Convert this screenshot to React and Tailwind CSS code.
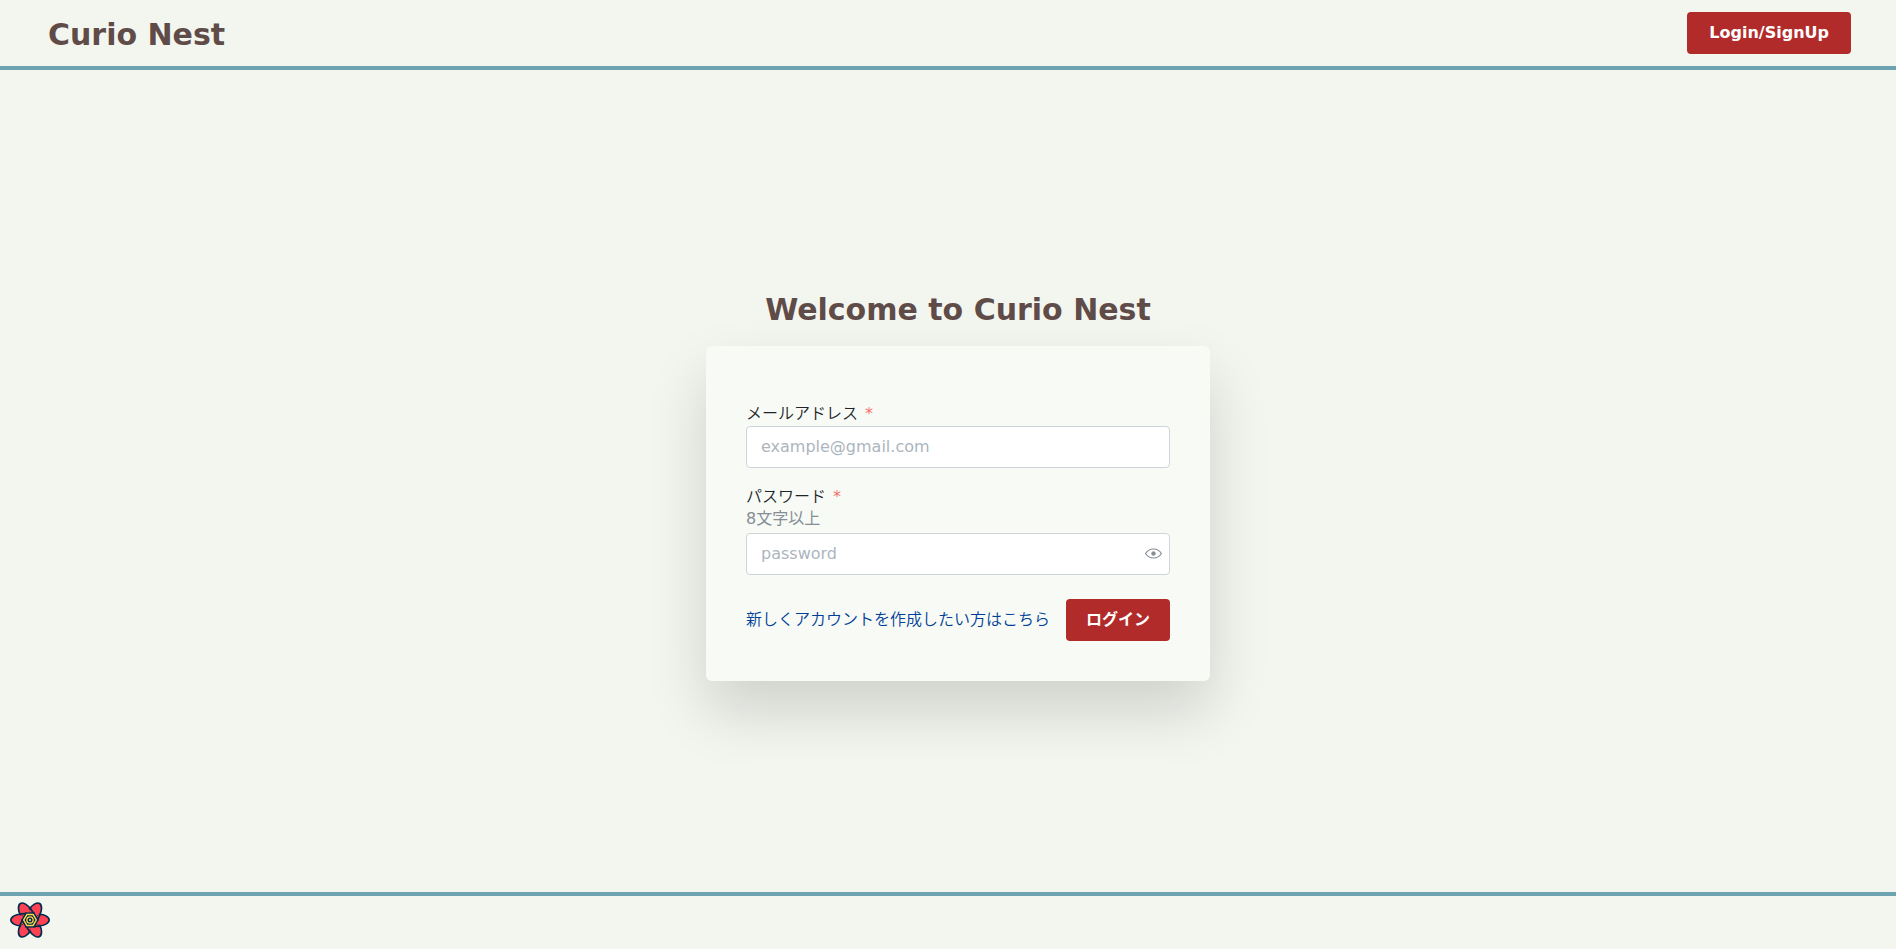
import { useState } from "react";

const PETAL_ANGLES = [0, 60, 120, 180, 240, 300];

function FlowerLogo() {
  return (
    <svg viewBox="0 0 190 190" className="size-10" aria-hidden="true">
      <g transform="translate(95 95)" stroke="#002c4b" strokeWidth="8" strokeLinejoin="round" strokeLinecap="round">
        {PETAL_ANGLES.map((a) => (
          <path
            key={a}
            transform={`rotate(${a})`}
            fill="#ff4154"
            d="M44 -27 C66 -29 91 -14 91 0 C91 14 66 29 44 27 L0 0 Z"
          />
        ))}
        {PETAL_ANGLES.map((a) => (
          <path key={a} transform={`rotate(${a})`} fill="#ff4154" stroke="none" d="M0 0 L44 -24 L60 0 L44 24 Z" />
        ))}
        {PETAL_ANGLES.map((a) => (
          <path key={a} transform={`rotate(${a})`} fill="none" d="M19 -33 L-46 -29" />
        ))}
        <path d="M36 0 L18 31 L-18 31 L-36 0 L-18 -31 L18 -31 Z" fill="#002c4b" />
        <path d="M30 0 L15 26 L-15 26 L-30 0 L-15 -26 L15 -26 Z" fill="none" stroke="#ffd94c" strokeWidth="7" />
        <circle r="15" fill="none" stroke="#ffd94c" strokeWidth="6" />
        <circle r="5" fill="#ffd94c" stroke="none" />
      </g>
    </svg>
  );
}

function EyeIcon() {
  return (
    <svg viewBox="0 0 15 15" className="size-[17px]" fill="none" aria-hidden="true">
      <path
        fill="currentColor"
        fillRule="evenodd"
        clipRule="evenodd"
        d="M7.5 11C4.80285 11 2.52952 9.62184 1.09622 7.50001C2.52952 5.37816 4.80285 4 7.5 4C10.1971 4 12.4705 5.37816 13.9038 7.50001C12.4705 9.62183 10.1971 11 7.5 11ZM7.5 3C4.30786 3 1.65639 4.70638 0.0760002 7.23501C-0.0253338 7.39715 -0.0253334 7.60288 0.0760014 7.76501C1.65639 10.2936 4.30786 12 7.5 12C10.6921 12 13.3436 10.2936 14.924 7.76501C15.0253 7.60288 15.0253 7.39715 14.924 7.23501C13.3436 4.70638 10.6921 3 7.5 3ZM7.5 9.5C8.60457 9.5 9.5 8.60457 9.5 7.5C9.5 6.39543 8.60457 5.5 7.5 5.5C6.39543 5.5 5.5 6.39543 5.5 7.5C5.5 8.60457 6.39543 9.5 7.5 9.5Z"
      />
    </svg>
  );
}

function PrimaryButton({ children, type = "button", padding = "px-5" }) {
  return (
    <button
      type={type}
      className={`h-[42px] shrink-0 cursor-pointer rounded bg-[#b22b2b] font-bold whitespace-nowrap text-white hover:bg-[#9c2424] ${padding}`}
    >
      {children}
    </button>
  );
}

function FieldLabel({ htmlFor, children }) {
  return (
    <label htmlFor={htmlFor} className="flex gap-[7px] leading-[25px] text-[#212529]">
      <span className="font-[350]">{children}</span>
      <span className="text-[#fa5252]/85">*</span>
    </label>
  );
}

const inputClass =
  "h-[42px] w-full rounded border border-[#ced4da] bg-white pl-3.5 text-base text-black outline-none placeholder:text-[#adb5bd] focus:border-[#6ea3b1]";

export default function App() {
  const [visible, setVisible] = useState(false);
  return (
    <div className="flex min-h-screen flex-col bg-[#f3f6ef] font-['DejaVu_Sans','Noto_Sans_CJK_JP',sans-serif] text-base">
      <header className="flex items-center justify-between border-b-4 border-[#6ea3b1] py-3 pr-[45px] pl-12">
        <h1 className="pt-1 text-3xl font-bold text-[#5f4b48]">Curio Nest</h1>
        <PrimaryButton padding="px-[22px]">Login/SignUp</PrimaryButton>
      </header>

      <main className="flex grow flex-col items-center justify-center gap-[18px] pt-2.5 pl-5">
        <h2 className="text-3xl font-bold text-[#5f4b48]">Welcome to Curio Nest</h2>
        <form
          onSubmit={(e) => e.preventDefault()}
          className="w-[504px] max-w-full rounded-md bg-[#f7faf5] px-10 pt-[55px] pb-10 shadow-[0_30px_60px_rgba(0,0,0,0.15)]"
        >
          <div className="mb-4">
            <FieldLabel htmlFor="email">メールアドレス</FieldLabel>
            <input id="email" type="email" placeholder="example@gmail.com" className={inputClass} />
          </div>
          <div className="mb-6">
            <FieldLabel htmlFor="password">パスワード</FieldLabel>
            <p id="password-hint" className="mb-1 leading-5 text-[#868e96]">
              8文字以上
            </p>
            <div className="flex items-center rounded border border-[#ced4da] bg-white focus-within:border-[#6ea3b1]">
              <input
                id="password"
                type={visible ? "text" : "password"}
                aria-describedby="password-hint"
                placeholder="password"
                className="h-10 min-w-0 grow bg-transparent pl-3.5 text-black outline-none placeholder:text-[#adb5bd]"
              />
              <button
                type="button"
                aria-label="パスワードの表示を切り替える"
                onClick={() => setVisible(!visible)}
                className="cursor-pointer px-[7px] py-1 text-[#868e96]"
              >
                <EyeIcon />
              </button>
            </div>
          </div>
          <div className="flex items-center justify-between">
            <a href="#signup" className="font-[350] whitespace-nowrap text-[#003f98] hover:underline">
              新しくアカウントを作成したい方はこちら
            </a>
            <PrimaryButton type="submit">ログイン</PrimaryButton>
          </div>
        </form>
      </main>

      <footer className="h-[57px] border-t-4 border-[#6ea3b1] px-2.5 pt-1">
        <button type="button" aria-label="Open React Query Devtools" className="block cursor-pointer">
          <FlowerLogo />
        </button>
      </footer>
    </div>
  );
}
